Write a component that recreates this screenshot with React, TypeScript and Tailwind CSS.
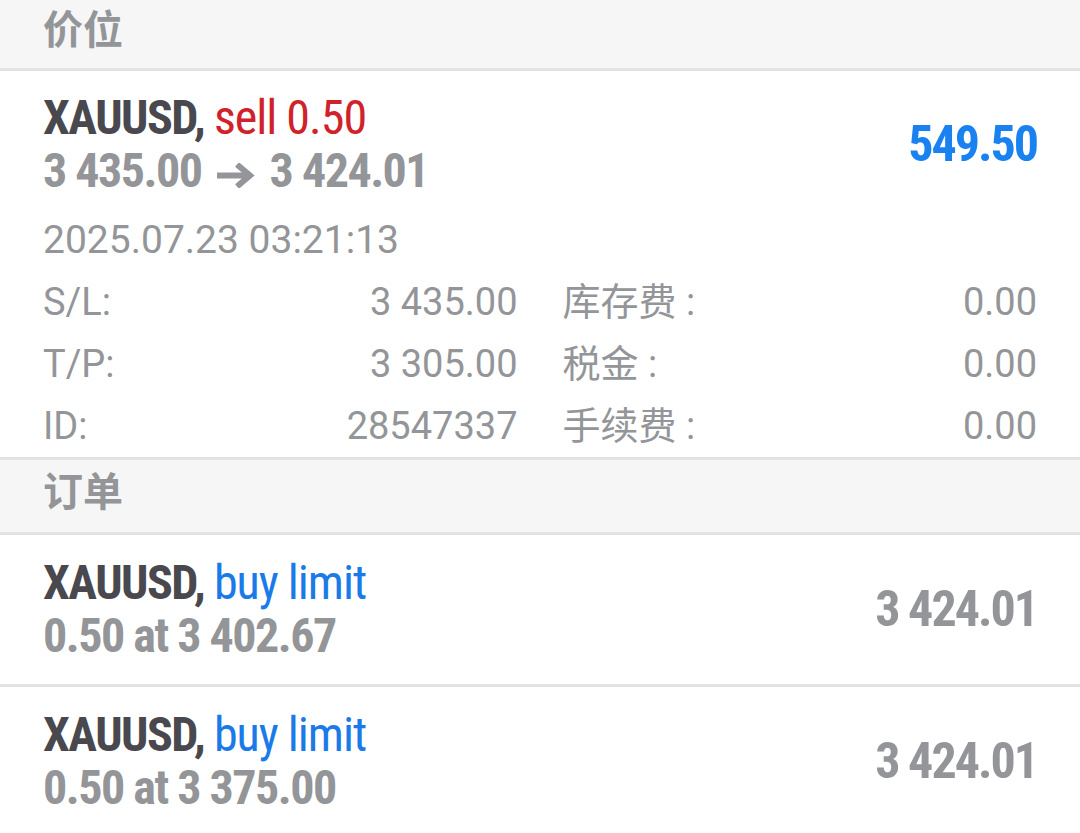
import React from 'react';

const cond = "font-['Roboto_Condensed','Roboto','Noto_Sans_CJK_SC',sans-serif]";
const reg = "font-['Roboto','Noto_Sans_CJK_SC',sans-serif]";

function SectionHeader({ title, tall }: { title: string; tall?: boolean }) {
  return (
    <div
      className={`${tall ? 'h-[75px]' : 'h-[71px]'} flex items-center pb-[6px] px-[43px] bg-[#f6f6f6] border-b-[3px] border-[#e3e3e3]`}
    >
      <span className={`${reg} text-[40px] font-bold text-[#939598]`}>{title}</span>
    </div>
  );
}

function DetailRow({ label, value, label2, value2 }: { label: string; value: string; label2: string; value2: string }) {
  return (
    <div className={`${reg} h-[62px] grid grid-cols-2 gap-[45px] items-center text-[38px] leading-[62px] text-[#939598]`}>
      <div className="flex justify-between">
        <span>{label}</span>
        <span>{value}</span>
      </div>
      <div className="flex justify-between">
        <span>{label2}</span>
        <span>{value2}</span>
      </div>
    </div>
  );
}

function Arrow() {
  return (
    <svg width="40" height="25" viewBox="0 0 40 25" className="inline-block align-baseline mx-[14px] mb-[-1px]">
      <path d="M1 12.5 H33 M21 1.5 L34 12.5 L21 23.5" fill="none" stroke="#939598" strokeWidth="6" />
    </svg>
  );
}

function OrderRow({ at, price }: { at: string; price: string }) {
  return (
    <div className="bg-white px-[43px] pt-[21px] pb-[22px] flex items-center justify-between border-b-[3px] border-[#e3e3e3]">
      <div className={`${cond} text-[48px] leading-[53px]`}>
        <div>
          <span className="font-bold tracking-[-1.5px] text-[#48484e]">XAUUSD, </span>
          <span className="tracking-[-1px] text-[#1a7be8]">buy limit</span>
        </div>
        <div className="font-bold tracking-[-1.5px] text-[#939598]">{at}</div>
      </div>
      <div className={`${cond} text-[50px] font-bold tracking-[-2px] text-[#939598]`}>{price}</div>
    </div>
  );
}

export default function App() {
  return (
    <div className="w-[1080px] h-[833px] overflow-hidden bg-white">
      <SectionHeader title="价位" />

      {/* open position */}
      <div className="bg-white px-[43px] pt-[20px] border-b-[3px] border-[#e3e3e3]">
        <div className="flex items-center justify-between">
          <div className={`${cond} text-[48px] leading-[53px]`}>
            <div>
              <span className="font-bold tracking-[-1.5px] text-[#48484e]">XAUUSD, </span>
              <span className="tracking-[-1px] text-[#d0222a]">sell 0.50</span>
            </div>
            <div className="font-bold tracking-[-1.5px] text-[#939598]">
              3 435.00
              <Arrow />
              3 424.01
            </div>
          </div>
          <div className={`${cond} text-[50px] font-bold tracking-[-2px] text-[#1a82f0]`}>549.50</div>
        </div>
        <div className={`${reg} mt-[12px] h-[62px] leading-[62px] text-[39px] text-[#939598]`}>2025.07.23 03:21:13</div>
        <DetailRow label="S/L:" value="3 435.00" label2="库存费 :" value2="0.00" />
        <DetailRow label="T/P:" value="3 305.00" label2="税金 :" value2="0.00" />
        <DetailRow label="ID:" value="28547337" label2="手续费 :" value2="0.00" />
      </div>

      <SectionHeader title="订单" tall />
      <OrderRow at="0.50 at 3 402.67" price="3 424.01" />
      <OrderRow at="0.50 at 3 375.00" price="3 424.01" />
    </div>
  );
}
